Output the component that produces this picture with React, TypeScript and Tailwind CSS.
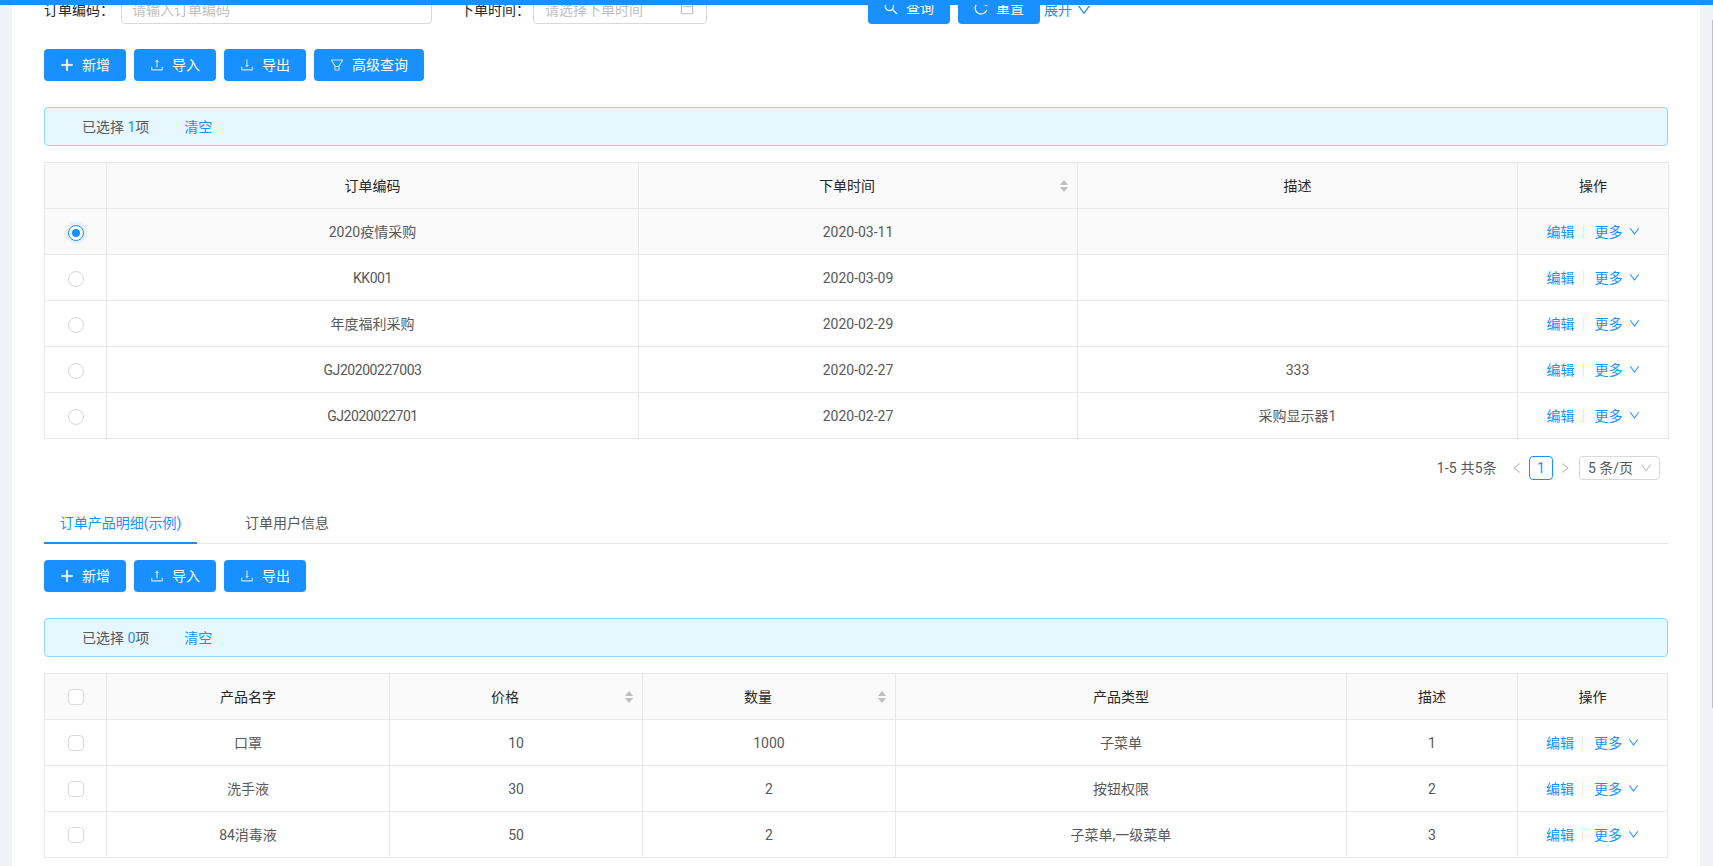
import type { ReactNode } from "react"

const icons = {
  plus: "M482 152h60q8 0 8 8v704q0 8-8 8h-60q-8 0-8-8V160q0-8 8-8z M176 474h672q8 0 8 8v60q0 8-8 8H176q-8 0-8-8v-60q0-8 8-8z",
  upload:
    "M400 317.7h73.9V656c0 4.4 3.6 8 8 8h60c4.4 0 8-3.6 8-8V317.7H624c6.7 0 10.4-7.7 6.3-12.9L518.3 163a8 8 0 0 0-12.6 0l-112 141.7c-4.1 5.3-.4 13 6.3 13zM878 626h-60c-4.4 0-8 3.6-8 8v154H214V634c0-4.4-3.6-8-8-8h-60c-4.4 0-8 3.6-8 8v198c0 17.7 14.3 32 32 32h684c17.7 0 32-14.3 32-32V634c0-4.4-3.6-8-8-8z",
  download:
    "M505.7 661a8 8 0 0 0 12.6 0l112-141.7c4.1-5.2.4-12.9-6.3-12.9h-74.1V168c0-4.4-3.6-8-8-8h-60c-4.4 0-8 3.6-8 8v338.3H400c-6.7 0-10.4 7.7-6.3 12.9l112 141.8zM878 626h-60c-4.4 0-8 3.6-8 8v154H214V634c0-4.4-3.6-8-8-8h-60c-4.4 0-8 3.6-8 8v198c0 17.7 14.3 32 32 32h684c17.7 0 32-14.3 32-32V634c0-4.4-3.6-8-8-8z",
  filter:
    "M880.1 154H143.9c-24.5 0-39.8 26.7-27.5 48L349 597.4V838c0 17.7 14.2 32 31.8 32h262.4c17.6 0 31.8-14.3 31.8-32V597.4L907.7 202c12.2-21.3-3.1-48-27.6-48zM603.4 798H420.6V642h182.9v156zm9.6-236.6l-9.5 16.6h-183l-9.5-16.6L212.7 226h598.6L613 561.4z",
  search:
    "M909.6 854.5L649.9 594.8C690.2 542.7 712 479 712 412c0-80.2-31.3-155.4-87.9-212.1-56.6-56.7-132-87.9-212.1-87.9s-155.5 31.3-212.1 87.9C143.2 256.5 112 331.8 112 412c0 80.1 31.3 155.5 87.9 212.1C256.5 680.8 331.8 712 412 712c67 0 130.6-21.8 182.7-62l259.7 259.6a8.2 8.2 0 0 0 11.6 0l43.6-43.5a8.2 8.2 0 0 0 0-11.6zM570.4 570.4C528 612.7 471.8 636 412 636s-116-23.3-158.4-65.6C211.3 528 188 471.8 188 412s23.3-116.1 65.6-158.4C296 211.3 352.2 188 412 188s116.1 23.2 158.4 65.6S636 352.2 636 412s-23.3 116.1-65.6 158.4z",
  reload:
    "M909.1 209.3l-56.4 44.1C775.8 155.1 656.2 92 521.9 92 290 92 102.3 279.5 102 511.5 101.7 743.7 289.8 932 521.9 932c181.3 0 335.8-115 394.6-276.1 1.5-4.2-.7-8.9-4.9-10.3l-56.7-19.5a8 8 0 0 0-10.1 4.8c-1.8 5-3.8 10-5.9 14.9-17.3 41-42.1 77.8-73.7 109.4A344.77 344.77 0 0 1 655.9 829c-42.3 17.9-87.4 27-133.8 27-46.5 0-91.5-9.1-133.8-27A341.5 341.5 0 0 1 279 755.2a342.16 342.16 0 0 1-73.7-109.4c-17.9-42.4-27-87.4-27-133.9s9.1-91.5 27-133.9c17.3-41 42.1-77.8 73.7-109.4 31.6-31.6 68.4-56.4 109.3-73.8 42.3-17.9 87.4-27 133.8-27 46.5 0 91.5 9.1 133.8 27a341.5 341.5 0 0 1 109.3 73.8c9.9 9.9 19.2 20.4 27.8 31.4l-60.2 47a8 8 0 0 0 3 14.1l175.6 43c5 1.2 9.9-2.6 9.9-7.7l.8-180.9c-.1-6.6-7.8-10.3-13-6.2z",
  down: "M884 256h-75c-5.1 0-9.9 2.5-12.9 6.6L512 654.2 227.9 262.6c-3-4.1-7.8-6.6-12.9-6.6h-75c-6.5 0-10.3 7.4-6.5 12.7l352.6 486.1c12.8 17.6 39 17.6 51.7 0l352.6-486.1c3.9-5.3.1-12.7-6.4-12.7z",
  left: "M724 218.3V141c0-6.7-7.7-10.4-12.9-6.3L260.3 486.8a31.86 31.86 0 0 0 0 50.3l450.8 352.1c5.3 4.1 12.9.4 12.9-6.3v-77.3c0-4.9-2.3-9.6-6.1-12.6l-360-281 360-281.1c3.8-3 6.1-7.7 6.1-12.6z",
  right:
    "M765.7 486.8L314.9 134.7A7.97 7.97 0 0 0 302 141v77.3c0 4.9 2.3 9.6 6.1 12.6l360 281.1-360 281.1c-3.9 3-6.1 7.7-6.1 12.6V883c0 6.7 7.7 10.4 12.9 6.3l450.8-352.1a31.96 31.96 0 0 0 0-50.4z",
  calendar:
    "M880 184H712v-64c0-4.4-3.6-8-8-8h-56c-4.4 0-8 3.6-8 8v64H384v-64c0-4.4-3.6-8-8-8h-56c-4.4 0-8 3.6-8 8v64H144c-17.7 0-32 14.3-32 32v664c0 17.7 14.3 32 32 32h736c17.7 0 32-14.3 32-32V216c0-17.7-14.3-32-32-32zm-40 656H184V460h656v380zM184 392V256h128v48c0 4.4 3.6 8 8 8h56c4.4 0 8-3.6 8-8v-48h256v48c0 4.4 3.6 8 8 8h56c4.4 0 8-3.6 8-8v-48h128v136H184z",
}

function Icon({ name, className }: { name: keyof typeof icons; className: string }) {
  return (
    <svg viewBox="64 64 896 896" fill="currentColor" className={className}>
      <path d={icons[name]} />
    </svg>
  )
}

function Btn({ icon, iconClass, children }: { icon: keyof typeof icons; iconClass?: string; children: ReactNode }) {
  return (
    <button className="flex h-8 items-center gap-2 rounded bg-[#1890ff] px-4 text-white shadow-[0_2px_0_rgba(0,0,0,0.015)]">
      <Icon name={icon} className={`size-3.5 ${iconClass ?? ""}`} />
      {children}
    </button>
  )
}

function Toolbar({ extra }: { extra?: boolean }) {
  return (
    <div className="flex gap-2">
      <Btn icon="plus" iconClass="stroke-current [stroke-width:45]">
        新增
      </Btn>
      <Btn icon="upload" iconClass="opacity-75">
        导入
      </Btn>
      <Btn icon="download" iconClass="opacity-75">
        导出
      </Btn>
      {extra && (
        <Btn icon="filter" iconClass="opacity-75">
          高级查询
        </Btn>
      )}
    </div>
  )
}

function SelectedAlert({ count }: { count: number }) {
  return (
    <div className="flex h-[39px] items-center rounded border border-[#91d5ff] bg-[#e6f7ff] pl-[37px]">
      <span>
        已选择 <span className="text-[#1890ff]">{count}</span>项
      </span>
      <a className="ml-[35px] text-[#1890ff]">清空</a>
    </div>
  )
}

function RowActions() {
  return (
    <div className="flex items-center justify-center text-[#1890ff]">
      <a>编辑</a>
      <span className="mx-2 h-3.5 w-px bg-[#e8e8e8]" />
      <a className="ml-[3px]">更多</a>
      <Icon name="down" className="ml-1.5 size-[11px]" />
    </div>
  )
}

function SortCaret() {
  return (
    <span className="absolute top-1/2 right-2 flex -translate-y-1/2 flex-col gap-0.5 text-[#bfbfbf]">
      <svg viewBox="0 0 10 6" fill="currentColor" className="h-[5px] w-2.5">
        <path d="M5 0l5 6H0z" />
      </svg>
      <svg viewBox="0 0 10 6" fill="currentColor" className="h-[5px] w-2.5">
        <path d="M5 6l5-6H0z" />
      </svg>
    </span>
  )
}

function Radio({ checked }: { checked?: boolean }) {
  if (checked) {
    return (
      <span className="mx-auto flex size-4 translate-y-px items-center justify-center rounded-full border border-[#1890ff] bg-white shadow-[0_0_0_3px_rgba(24,144,255,0.08)]">
        <span className="size-2 rounded-full bg-[#1890ff]" />
      </span>
    )
  }
  return <span className="mx-auto block size-4 translate-y-px rounded-full border border-[#d9d9d9] bg-white" />
}

function Checkbox() {
  return <span className="mx-auto block size-4 rounded-sm border border-[#d9d9d9] bg-white" />
}

interface Column {
  title: string
  width: number
  sort?: boolean
}

function DataTable({
  columns,
  rows,
  head,
  mark,
  selected,
  actionsWidth,
}: {
  columns: Column[]
  rows: string[][]
  head: ReactNode
  mark: (i: number) => ReactNode
  selected?: number
  actionsWidth: number
}) {
  return (
    <table className="w-full table-fixed border-separate border-spacing-0 border-t border-l border-[#e8e8e8] text-center">
      <colgroup>
        <col className="w-[62px]" />
        {columns.map((c) => (
          <col key={c.title} style={{ width: c.width }} />
        ))}
        <col style={{ width: actionsWidth }} />
      </colgroup>
      <thead>
        <tr className="h-[46px] bg-[#fafafa] text-[#262626]">
          <th className="border-r border-b border-[#e8e8e8] font-normal">{head}</th>
          {columns.map((c) => (
            <th
              key={c.title}
              className={`relative border-r border-b border-[#e8e8e8] font-normal ${c.sort ? "pr-[22px]" : ""}`}
            >
              {c.title}
              {c.sort && <SortCaret />}
            </th>
          ))}
          <th className="border-r border-b border-[#e8e8e8] font-normal">操作</th>
        </tr>
      </thead>
      <tbody>
        {rows.map((row, i) => (
          <tr key={i} className={`h-[46px] ${selected === i ? "bg-[#fafafa]" : ""}`}>
            <td className="border-r border-b border-[#e8e8e8]">{mark(i)}</td>
            {row.map((cell, j) => (
              <td
                key={j}
                className={`border-r border-b border-[#e8e8e8] ${/^[A-Z]/.test(cell) ? "tracking-[-0.45px]" : ""}`}
              >
                {cell}
              </td>
            ))}
            <td className="border-r border-b border-[#e8e8e8]">
              <RowActions />
            </td>
          </tr>
        ))}
      </tbody>
    </table>
  )
}

const orderColumns: Column[] = [
  { title: "订单编码", width: 532 },
  { title: "下单时间", width: 439, sort: true },
  { title: "描述", width: 440 },
]

const orderRows = [
  ["2020疫情采购", "2020-03-11", ""],
  ["KK001", "2020-03-09", ""],
  ["年度福利采购", "2020-02-29", ""],
  ["GJ20200227003", "2020-02-27", "333"],
  ["GJ2020022701", "2020-02-27", "采购显示器1"],
]

const productColumns: Column[] = [
  { title: "产品名字", width: 283 },
  { title: "价格", width: 253, sort: true },
  { title: "数量", width: 253, sort: true },
  { title: "产品类型", width: 451 },
  { title: "描述", width: 171 },
]

const productRows = [
  ["口罩", "10", "1000", "子菜单", "1"],
  ["洗手液", "30", "2", "按钮权限", "2"],
  ["84消毒液", "50", "2", "子菜单,一级菜单", "3"],
]

export default function App() {
  return (
    <div className="relative flex h-screen flex-col overflow-hidden bg-[#f0f2f5] font-['Roboto','Noto_Sans_CJK_SC',sans-serif] text-sm text-[#595959]">
      <div className="h-[5px] shrink-0 bg-[#1890ff]" />
      {/* scrollbar thumb edge */}
      <div className="absolute top-5 right-0 h-[688px] w-px bg-[#c1c1c1]" />

      <main className="ml-3 mr-[13px] flex-1 overflow-hidden bg-white px-8">
        {/* page is scrolled, top of the search form sits under the bar */}
        <div className="-mt-[13px] flex h-8 items-center">
          <label className="relative top-0.5 w-[77px] text-[#262626]">订单编码：</label>
          <div className="flex h-8 w-[311px] items-center rounded border border-[#d9d9d9] pl-[10px] text-[#bfbfbf]">
            <span className="relative top-0.5">请输入订单编码</span>
          </div>
          <label className="relative top-0.5 ml-7 w-[73px] text-[#262626]">下单时间：</label>
          <div className="flex h-8 w-[174px] items-center justify-between rounded border border-[#d9d9d9] pr-3 pl-[11px] text-[#bfbfbf]">
            <span className="relative top-0.5">请选择下单时间</span>
            <Icon name="calendar" className="size-3.5" />
          </div>
          <div className="ml-[161px] flex gap-2">
            <Btn icon="search">查询</Btn>
            <Btn icon="reload">重置</Btn>
          </div>
          <a className="relative top-0.5 ml-1 flex items-center gap-[5px] text-[#1890ff]">
            展开
            <Icon name="down" className="size-3.5" />
          </a>
        </div>

        <div className="mt-[25px]">
          <Toolbar extra />
        </div>
        <div className="mt-[26px]">
          <SelectedAlert count={1} />
        </div>
        <div className="mt-4">
          <DataTable
            columns={orderColumns}
            rows={orderRows}
            head={null}
            selected={0}
            actionsWidth={151}
            mark={(i) => <Radio checked={i === 0} />}
          />
        </div>

        <div className="mt-[17px] flex items-center justify-end pr-2">
          <span className="tracking-[0.2px]">1-5 共5条</span>
          <Icon name="left" className="ml-[14px] size-3 text-[#bfbfbf]" />
          <span className="ml-[6px] flex size-6 items-center justify-center rounded border border-[#1890ff] text-[#1890ff]">
            1
          </span>
          <Icon name="right" className="ml-[6px] size-3 text-[#bfbfbf]" />
          <div className="ml-2 flex h-6 w-[81px] items-center justify-between rounded border border-[#d9d9d9] pr-[7px] pl-2">
            <span>5 条/页</span>
            <Icon name="down" className="size-3 text-[#bfbfbf]" />
          </div>
        </div>

        <div className="mt-[21px] flex h-[43px] items-end border-b border-[#e8e8e8]">
          <div className="-mb-px flex h-[43px] w-[153px] items-center justify-center border-b-2 border-[#1890ff] pt-0.5 text-[#1890ff]">
            订单产品明细(示例)
          </div>
          <div className="ml-8 flex h-[43px] items-center px-4 pt-0.5">订单用户信息</div>
        </div>

        <div className="mt-4">
          <Toolbar />
        </div>
        <div className="mt-[26px]">
          <SelectedAlert count={0} />
        </div>
        <div className="mt-4">
          <DataTable
            columns={productColumns}
            rows={productRows}
            head={<Checkbox />}
            actionsWidth={150}
            mark={() => <Checkbox />}
          />
        </div>
      </main>
    </div>
  )
}
